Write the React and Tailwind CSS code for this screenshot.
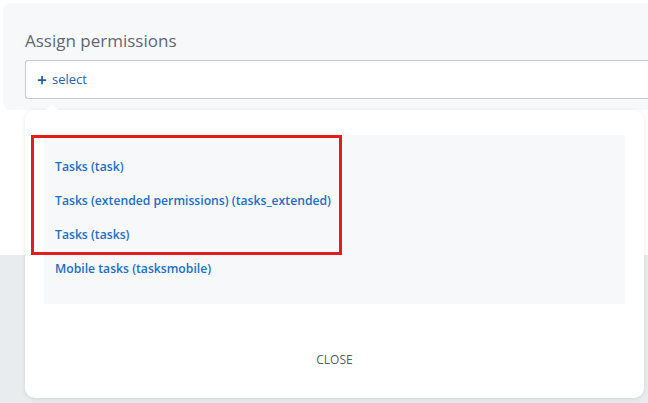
import { Plus } from "lucide-react";

const items = [
  "Tasks (task)",
  "Tasks (extended permissions) (tasks_extended)",
  "Tasks (tasks)",
  "Mobile tasks (tasksmobile)",
];

const App = () => {
  return (
    <div className="relative w-[648px] h-[403px] overflow-hidden bg-white font-['Open_Sans',sans-serif]">
      {/* form panel */}
      <div className="ml-[3px] mt-[3px] h-[107px] rounded-l-lg bg-[#f7f8fa] pl-[22px] pt-[26px]">
        <div className="text-[17px] leading-[24px] text-[#5f6872]">Assign permissions</div>
        <div className="mt-[7px] flex h-[39px] items-center gap-1 rounded-l-[3px] border border-r-0 border-[#c6cbd2] bg-white pl-[10px]">
          <Plus className="h-3 w-3 text-[#1f5ca8]" strokeWidth={3.5} />
          <span className="text-[13px] text-[#2a62ad]">select</span>
        </div>
      </div>

      {/* lower section */}
      <div className="mt-[145px] h-[200px] bg-[#e9ecef]" />

      {/* popover */}
      <div className="absolute left-[25px] top-[110px] w-[619px] h-[288px] rounded-[10px] bg-white shadow-[0_1px_5px_rgba(0,0,0,0.09)] px-[19px] pt-[25px]">
        <div className="absolute -top-[6px] left-[20px] h-0 w-0 border-x-[7px] border-b-[7px] border-x-transparent border-b-white" />
        <div className="h-[169px] bg-[#f7f8fa] px-[11px] pt-[22px] flex flex-col gap-[15px]">
          {items.map((t, i) => (
            <div key={i} className="text-[12.2px] leading-[19px] font-semibold text-[#1d6fc4]">
              {t}
            </div>
          ))}
        </div>
        <div className="mt-[47px] text-center text-[12px] text-[#555d66]">CLOSE</div>
      </div>

      {/* highlight annotation */}
      <div className="absolute left-[31px] top-[135px] w-[311px] h-[120px] border-[3px] border-[#e31c1c]" />
    </div>
  );
};

export default App;
